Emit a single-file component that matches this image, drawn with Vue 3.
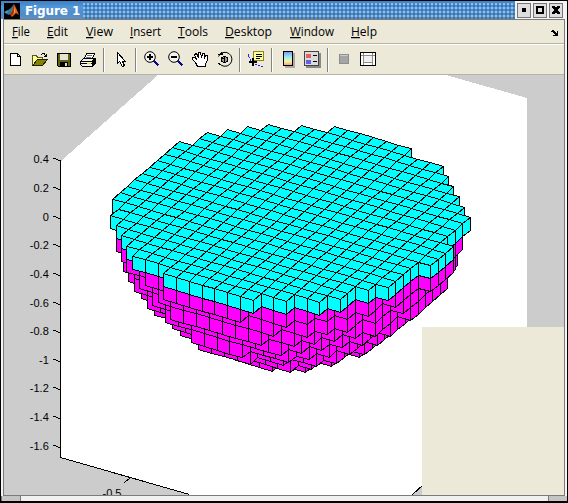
<script setup>
const menus = [
  { key: 'F', rest: 'ile', w: 18 },
  { key: 'E', rest: 'dit', w: 21 },
  { key: 'V', rest: 'iew', w: 27 },
  { key: 'I', rest: 'nsert', w: 31 },
  { key: 'T', rest: 'ools', w: 30 },
  { key: 'D', rest: 'esktop', w: 47 },
  { key: 'W', rest: 'indow', w: 44 },
  { key: 'H', rest: 'elp', w: 26 },
]

const ticks = [
  [161, '0.4'], [190, '0.2'], [219, '0'], [247, '-0.2'], [276, '-0.4'], [305, '-0.6'],
  [333, '-0.8'], [362, '-1'], [390, '-1.2'], [419, '-1.4'], [448, '-1.6'],
]

// First and one-past-last column of each top-layer row, starting at row -7
const topRows = [
  [8, 14], [6, 17], [4, 18], [3, 19], [2, 20], [1, 21], [1, 22], [0, 22], [0, 22], [0, 22],
  [0, 23], [0, 23], [0, 23], [0, 22], [0, 22], [0, 22], [1, 22], [1, 21], [2, 20], [3, 20],
  [4, 19], [5, 17], [8, 15],
]
// Squared radius of each layer, top to bottom
const layers = [132.4, 128.8, 121, 112.4, 99.6, 84.5, 67, 47, 27, 4]
const FIRST_ROW = -7
const CELL = 13

function filled(i, j, k) {
  const row = topRows[j - FIRST_ROW]
  if (k < 0 || !row || i < row[0] || i >= row[1]) return false
  if (k === 0) return true
  const dx = i + 0.5 - 11.2
  const dy = j + 0.5 - 4.5
  return dx * dx + dy * dy <= (layers[k] ?? -1)
}

function project(i, j, k) {
  const x = 179.5 + 12.87 * i - 7.44 * j
  const y = 141.3 + 3.74 * i + 6.41 * j + CELL * k
  return `${Math.round(x - 4.4) + 0.5},${Math.round(y - 75.4) + 0.5}`
}

const faces = []
for (let k = layers.length - 1; k >= 0; k--) {
  for (let j = FIRST_ROW; j < 16; j++) {
    for (let i = 0; i < 23; i++) {
      if (!filled(i, j, k)) continue
      const color = k === 0 ? '#00ffff' : '#ff00ff'
      const add = (...pts) => faces.push({ color, points: pts.map((p) => project(...p)).join(' ') })
      if (!filled(i, j, k - 1)) add([i, j, k], [i + 1, j, k], [i + 1, j + 1, k], [i, j + 1, k])
      if (!filled(i, j + 1, k)) add([i, j + 1, k], [i + 1, j + 1, k], [i + 1, j + 1, k + 1], [i, j + 1, k + 1])
      if (!filled(i + 1, j, k)) add([i + 1, j, k], [i + 1, j + 1, k], [i + 1, j + 1, k + 1], [i + 1, j, k + 1])
    }
  }
}
</script>

<template>
  <div class="window">
    <header class="titlebar">
      <svg class="logo" width="16" height="16" viewBox="0 0 16 16">
        <rect width="16" height="16" fill="#000" />
        <path d="M0 9L4 7L6 9L3 11Z" fill="#4a9ac8" />
        <path d="M4 7L7 5L10 1L8 9L5 12L3 11Z" fill="#2b7f9c" />
        <path d="M10 1L12 5L15 12L12 10L8 14L6 11L8 8Z" fill="#e8641b" />
        <path d="M10 1L11 6L9 11L7 13L6 11L9 7Z" fill="#a52a12" />
        <path d="M10 3L11 8L10 11Z" fill="#ffc05a" />
      </svg>
      <span class="title">Figure 1</span>
      <div class="dots"></div>
      <div class="controls">
        <span class="control"><svg width="11" height="11"><rect x="4" y="4" width="4" height="4" /></svg></span>
        <span class="control"><svg width="11" height="11"><rect x="3" y="3" width="6" height="6" fill="none" stroke="#000" stroke-width="2" /></svg></span>
        <span class="control"><svg width="11" height="11"><path d="M2 2h3v1h2v-1h3v2h-1v1h-1v2h1v1h1v2h-3v-1h-2v1h-3v-2h1v-1h1v-2h-1v-1h-1z" /></svg></span>
      </div>
    </header>

    <div class="body">
      <nav class="menubar">
        <span v-for="m in menus" :key="m.key" class="menu">
          <svg :width="m.w" height="18"><text x="0" y="13" :textLength="m.w" lengthAdjust="spacingAndGlyphs"><tspan class="key">{{ m.key }}</tspan>{{ m.rest }}</text></svg>
        </span>
        <svg class="dock" width="8" height="7"><path d="M1 0h2v1h1v1h1v1h1v-2h1v5h-5v-1h2v-1h-1v-1h-1v-1h-2v-1h1z" /></svg>
      </nav>

      <div class="toolbar">
        <svg width="560" height="29" viewBox="4 44 560 29" shape-rendering="crispEdges">
          <!-- new -->
          <path d="M10.5 52.5H17.5L20.5 55.5V64.5H10.5Z" fill="#fff" stroke="#000" />
          <path d="M17.5 52.5V55.5H20.5" fill="none" stroke="#000" />
          <!-- open -->
          <path d="M32.5 63.5V54.5H36.5L37.5 56.5H42.5V59" fill="#ffff8c" stroke="#555533" />
          <path d="M32.5 64.5L37.5 58.5H47.5L42.5 64.5Z" fill="#848400" stroke="#222200" />
          <path d="M40.5 54.5L42.5 52.5H44L46.5 55.5M44 55.5H46.5V53" fill="none" stroke="#000" />
          <!-- save -->
          <path d="M57.5 52.5H70.5V65.5H58.5L57.5 64.5Z" fill="#63630c" stroke="#000" />
          <rect x="60" y="53" width="8" height="6" fill="#e4e4dc" />
          <rect x="60" y="61" width="8" height="5" fill="#000" />
          <rect x="65" y="62" width="2" height="3" fill="#ddd" />
          <!-- print -->
          <path d="M84.5 57.5L86.5 52.5H94.5L92.5 57.5" fill="#fff" stroke="#000" />
          <path d="M87 54.5H92M86 56.5H91" stroke="#777" />
          <path d="M80.5 60.5L83.5 57.5H95.5V62.5L92.5 65.5H82.5L80.5 63.5Z" fill="#f2f2f2" stroke="#000" />
          <path d="M81 60.5H92.5V65M81 62.5H92M92 60.5L95 57.5M93.5 64V59M94.5 63V58" fill="none" stroke="#000" />
          <path d="M87 62.5H91" stroke="#ece000" />
          <!-- separators -->
          <path d="M103.5 47V71M135.5 47V71M239.5 47V71M271.5 47V71M327.5 47V71" stroke="#828282" />
          <path d="M104.5 47V71M136.5 47V71M240.5 47V71M272.5 47V71M328.5 47V71" stroke="#fff" />
          <!-- pointer -->
          <path d="M117.5 51.5V62.5L119.5 60.5L122.5 65.5L124.5 64.5L122.5 60.5H125.5Z" fill="#fff" stroke="#000" />
          <!-- zoom in / out -->
          <g v-for="x in [0, 24]" :key="x" :transform="`translate(${x} 0)`">
            <circle cx="150" cy="56" r="5.3" fill="#f5f5f0" stroke="#000" shape-rendering="auto" />
            <path d="M147 56H153" stroke="#000" stroke-width="2" />
            <path v-if="x === 0" d="M150 53V59" stroke="#000" stroke-width="2" />
            <path d="M154 60L158.5 64.5" stroke="#0a0a84" stroke-width="2.4" />
          </g>
          <!-- pan -->
          <path d="M197.5 65.5L195.5 61.5L192.5 58.5V56.5H194.5L196.5 58.5L194.5 53.5L196.5 52.5L198.5 56.5V51.5H200.5L201.5 56.5L202.5 52.5H204.5V57.5L205.5 54.5H207.5V59.5L205.5 62.5V65.5Z" fill="#fff" stroke="#000" />
          <!-- rotate -->
          <path d="M218.5 55.5A7 7 0 1 1 219 62" fill="none" stroke="#000" shape-rendering="auto" />
          <path d="M216 54H223V52L221 51L219 53Z" fill="#000" />
          <path d="M221.5 56.5L224.5 55.5L227.5 56.5V60.5L224.5 61.5L221.5 60.5Z" fill="#999" stroke="#000" />
          <path d="M224.5 56V61M222 57.5H225" stroke="#000" />
          <path d="M218.5 62L220 64" stroke="#000" />
          <!-- data cursor -->
          <path d="M248.5 53V55L249.5 57M250.5 58V60M255 63.5H257M258 64.5H260M261 65.5H263" stroke="#2020ff" fill="none" />
          <rect x="253.5" y="50.5" width="10" height="9" fill="#ffff9c" stroke="#8c8420" />
          <path d="M256 53.5H262M256 55.5H262M256 57.5H260" stroke="#000" />
          <path d="M249 61H257M253 57V65" stroke="#000" stroke-width="2" />
          <!-- colorbar -->
          <defs>
            <linearGradient id="spectrum" x1="0" y1="0" x2="0" y2="1">
              <stop offset="0" stop-color="#8c8cf4" />
              <stop offset=".4" stop-color="#90f0f4" />
              <stop offset=".7" stop-color="#f4f49c" />
              <stop offset="1" stop-color="#f49a8c" />
            </linearGradient>
          </defs>
          <path d="M285 66H294V52" fill="none" stroke="#aaa" stroke-width="2" />
          <rect x="283.5" y="50.5" width="9" height="14" fill="url(#spectrum)" stroke="#000" />
          <!-- legend -->
          <path d="M306 66H320V52" fill="none" stroke="#888" stroke-width="2" />
          <rect x="304.5" y="50.5" width="14" height="14" fill="#dcdcdc" stroke="#444" />
          <rect x="306" y="53" width="5" height="4" fill="#e86060" />
          <rect x="306" y="59" width="5" height="4" fill="#6060e8" />
          <path d="M313 54.5H317M313 60.5H317" stroke="#000" />
          <!-- hide tools -->
          <rect x="339.5" y="53.5" width="9" height="9" fill="#a5a5a5" stroke="#8c8c8c" />
          <path d="M340 54.5H348" stroke="#c8c8c8" />
          <!-- show tools -->
          <rect x="360.5" y="51.5" width="15" height="13" fill="#fff" stroke="#000" />
          <path d="M361 54.5H375M363.5 52V64M372.5 52V64M364 61.5H372" stroke="#8c8c8c" />
          <rect x="364" y="55" width="8" height="6" fill="#f0f0f0" />
        </svg>
      </div>

      <main class="figure">
        <svg width="560" height="420" shape-rendering="crispEdges">
          <path d="M154 0H442L523 23V420H187L57 383V86Z" fill="#fff" />
          <path d="M408 420L420 409V420Z" fill="#ccc" />
          <path d="M56.5 86V382.5L185.5 419.5M126.5 402.5L120.5 407.5M408 420L420 409" fill="none" stroke="#000" />
          <g v-for="t in ticks" :key="t[1]">
            <path :d="`M49 ${t[0] - 77.5}H51L55 ${t[0] - 75.5}H57`" fill="none" stroke="#000" />
            <text class="tick" x="44.8" :y="t[0] - 73" text-anchor="end">{{ t[1] }}</text>
          </g>
          <text class="tick" x="98.5" y="422">-0.5</text>
          <polygon v-for="(f, n) in faces" :key="n" :points="f.points" :fill="f.color" stroke="#000" stroke-width="1" stroke-linejoin="bevel" />
        </svg>
        <div class="panel"></div>
      </main>
    </div>

    <footer class="resize"><i class="grip left"></i><i class="track"></i><i class="grip right"></i></footer>
  </div>
</template>

<style>
body { margin: 0; background: #fff; }
</style>

<style scoped>
.window {
  box-sizing: border-box;
  width: 568px;
  height: 503px;
  display: flex;
  flex-direction: column;
  background: #f4f4f4;
  border: 1px solid #000;
  border-bottom-width: 2px;
  overflow: hidden;
}
.titlebar {
  display: flex;
  flex: none;
  height: 18px;
  padding-left: 3px;
  background: linear-gradient(#3d80c4, #5296da 35%, #4f8cc8 70%, #5b8fc4);
}
.logo { margin-top: 2px; flex: none; }
.title {
  box-sizing: border-box;
  width: 63px;
  padding-left: 5px;
  font: bold 12px/20px "DejaVu Sans", sans-serif;
  letter-spacing: -0.1px;
  color: #fff;
  white-space: nowrap;
}
.dots {
  flex: 1;
  margin-top: 2px;
  background:
    radial-gradient(circle at 1px 1px, #8fbdea 0.8px, transparent 1px) 0 0 / 4px 4px,
    radial-gradient(circle at 1px 1px, #3a72ac 0.8px, transparent 1px) 2px 2px / 4px 4px;
}
.controls {
  display: flex;
  gap: 2px;
  padding: 2px 4px 0 2px;
  background: #f4f4f4;
}
.control {
  box-sizing: border-box;
  width: 14px;
  height: 15px;
  background: #dedede;
  border: 1px solid #777;
  display: flex;
}
.control svg { display: block; shape-rendering: crispEdges; }
.body {
  box-sizing: border-box;
  width: 562px;
  height: 477px;
  margin-left: 2px;
  flex: none;
  border: 1px solid #7b7b7b;
  background: #ece9d8;
}
.menubar {
  box-sizing: border-box;
  height: 24px;
  display: flex;
  align-items: flex-start;
  gap: 17.3px;
  padding: 3px 5px 0 8px;
  border-bottom: 1px solid #b5b5a5;
}
.menu svg { display: block; overflow: visible; }
.menu text { font: 12.5px "Open Sans", "Noto Sans", sans-serif; fill: #000; }
.key { text-decoration: underline; }
.dock { margin: 7px 0 0 auto; shape-rendering: crispEdges; }
.toolbar {
  box-sizing: border-box;
  height: 31px;
  border-top: 1px solid #fff;
  border-bottom: 1px solid #b5b5a5;
}
.toolbar svg { display: block; }
.figure {
  display: grid;
  width: 560px;
  height: 420px;
  background: #ccc;
}
.figure > * { grid-area: 1 / 1; display: block; }
.tick { font: 11px "Liberation Sans", Arial, sans-serif; fill: #000; }
.panel {
  place-self: end;
  width: 142px;
  height: 168px;
  background: #ece9d8;
}
.resize { display: flex; flex: 1; gap: 1px; background: #777; padding-left: 1px; }
.grip { width: 18px; background: #c4c4c4; }
.track { flex: 1; background: #f0f0f0; }
</style>
